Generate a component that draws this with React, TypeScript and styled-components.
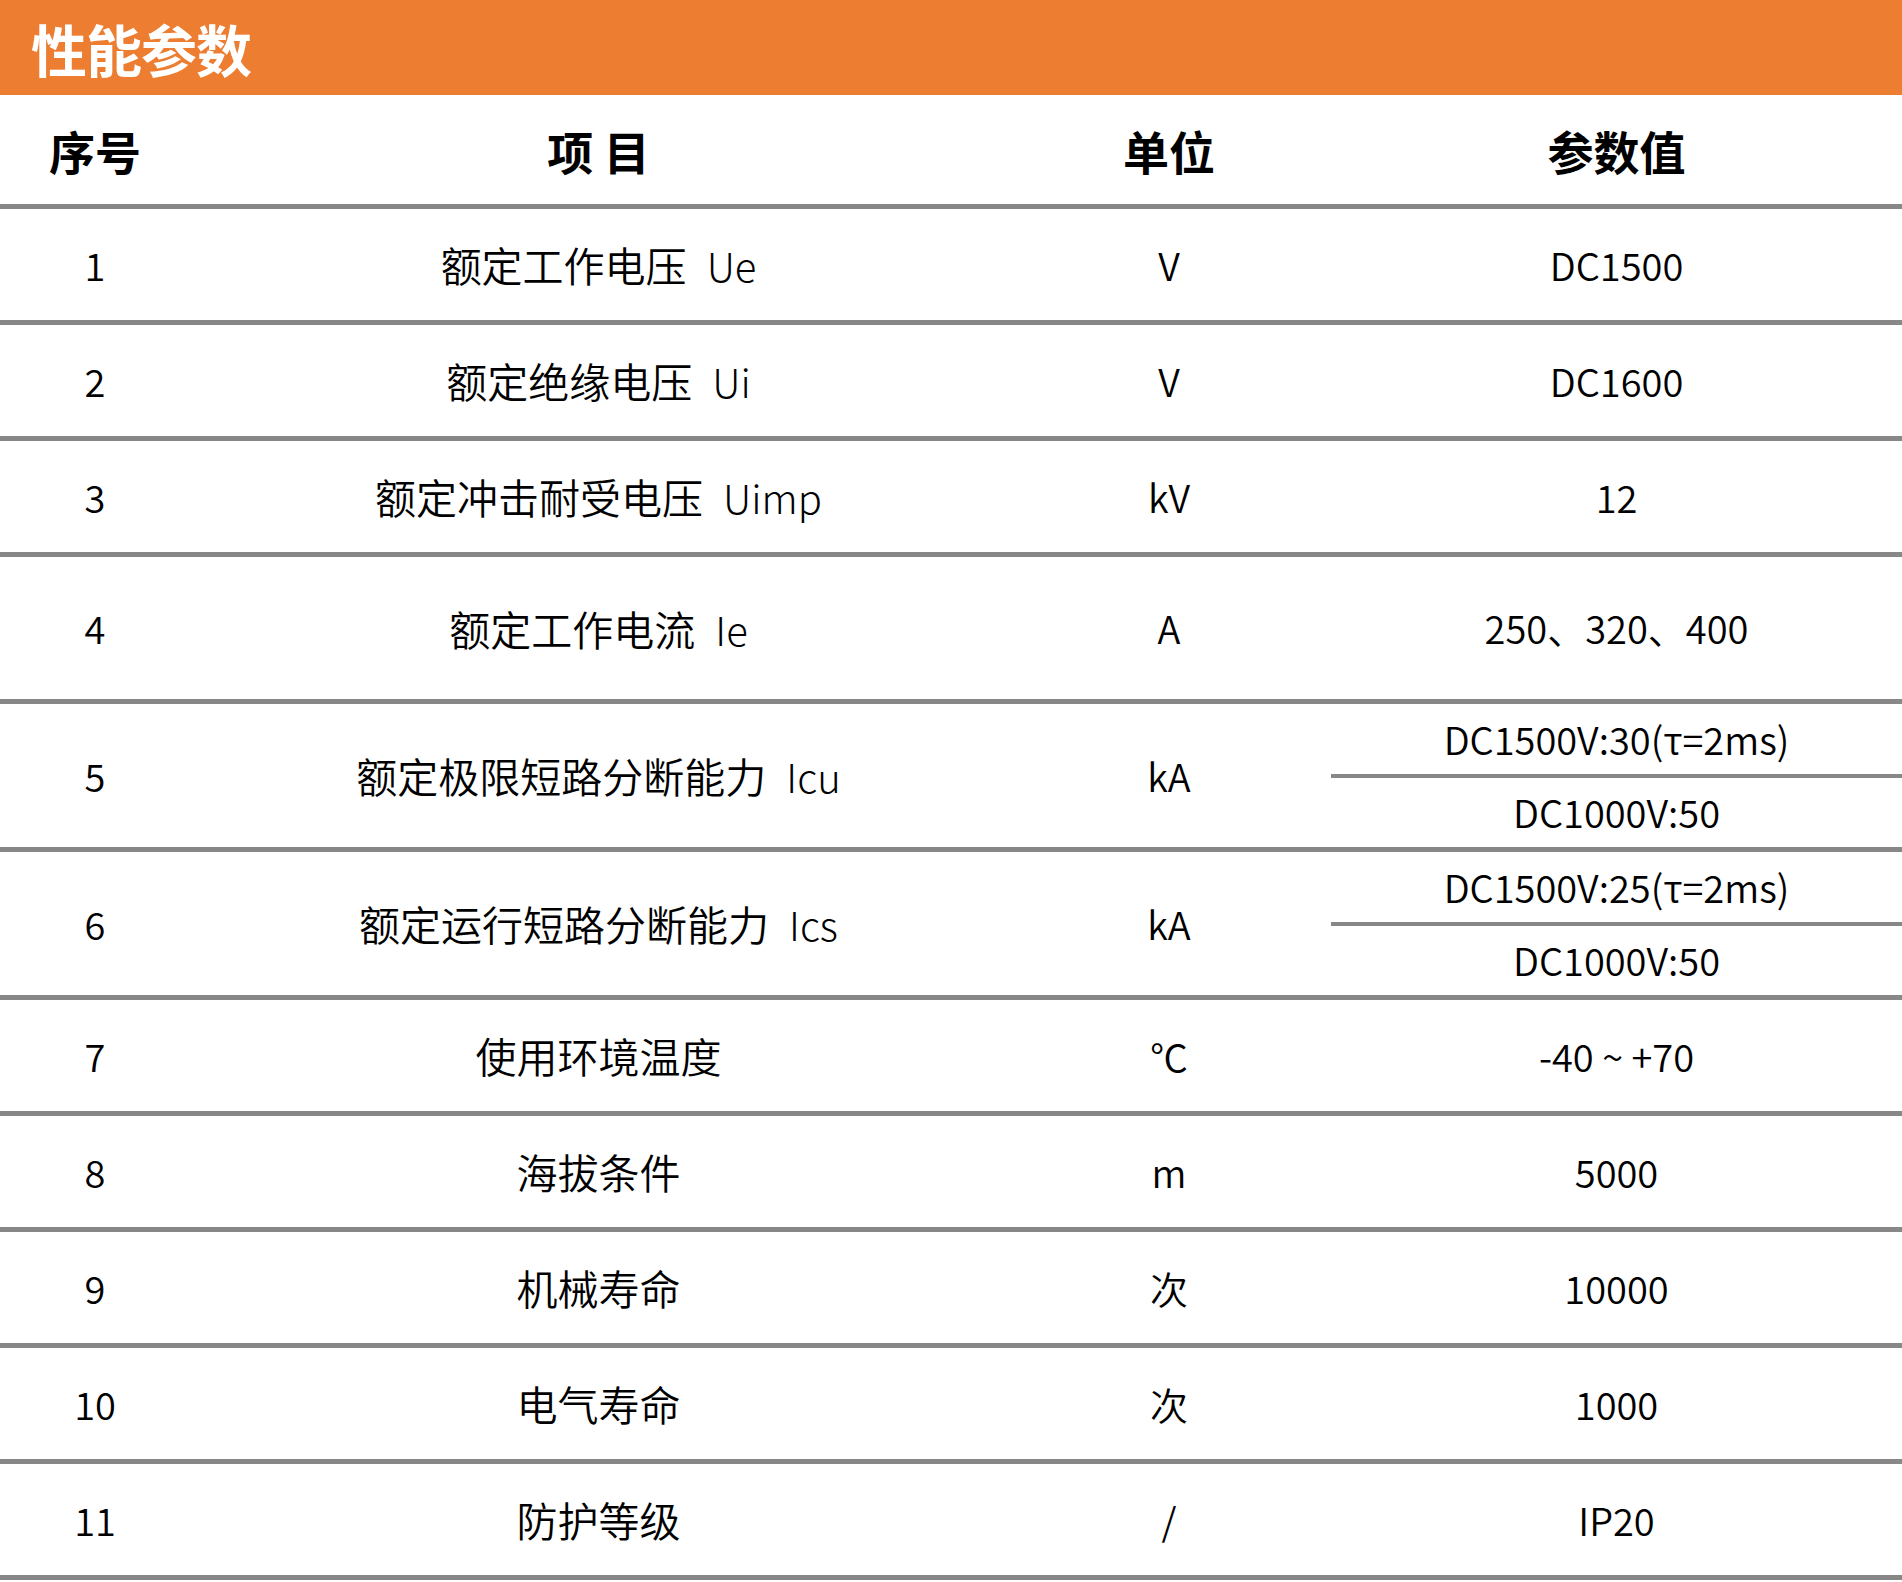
import React from "react";
import styled, { createGlobalStyle } from "styled-components";

const GlobalStyle = createGlobalStyle`
  html, body {
    margin: 0;
    padding: 0;
    background: #ffffff;
  }
  body {
    font-family: "Noto Sans CJK SC", "Noto Sans", sans-serif;
    color: #000;
  }
`;

const Page = styled.div`
  width: 1902px;
  background: #fff;
`;

const TitleBar = styled.div`
  height: 95px;
  background: #ed7d31;
  display: flex;
  align-items: center;
  padding-left: 31px;
  box-sizing: border-box;
`;

const Title = styled.h1`
  margin: 0;
  font-family: "Noto Sans CJK SC", sans-serif;
  font-weight: 700;
  font-size: 56px;
  line-height: 1;
  color: #fff;
  letter-spacing: -1px;
`;

const LINE = "#878787";

const Row = styled.div<{ $h: number }>`
  display: grid;
  grid-template-columns: 190px 817px 324px 571px;
  height: ${(p) => p.$h}px;
  border-bottom: 5px solid ${LINE};
  box-sizing: border-box;
`;

const Cell = styled.div`
  display: flex;
  align-items: center;
  justify-content: center;
  white-space: nowrap;
`;

const HeadText = styled.span`
  font-family: "Noto Sans CJK SC", sans-serif;
  font-weight: 700;
  font-size: 46px;
  line-height: 1;
  color: #000;
`;

const ItemText = styled.span`
  font-family: "Noto Sans CJK SC", sans-serif;
  font-weight: 350;
  font-size: 41px;
  line-height: 1;
  color: #000;
`;

const Latin = styled.span`
  font-family: "Noto Sans CJK SC", sans-serif;
  font-weight: 300;
  font-size: 40px;
  margin-left: 20px;
`;

const ValueText = styled.span`
  font-family: "Noto Sans CJK SC", sans-serif;
  font-weight: 350;
  font-size: 38px;
  line-height: 1;
  color: #000;
`;

const SplitCell = styled.div`
  display: flex;
  flex-direction: column;
`;

const SubCell = styled.div<{ $divider?: boolean }>`
  flex: 1;
  display: flex;
  align-items: center;
  justify-content: center;
  border-bottom: ${(p) => (p.$divider ? `4px solid ${LINE}` : "none")};
  white-space: nowrap;
`;

type Spec = {
  no: string;
  name: string;
  sym?: string;
  unit: string;
  values: string[];
  h: number;
};

const rows: Spec[] = [
  { no: "1", name: "额定工作电压", sym: "Ue", unit: "V", values: ["DC1500"], h: 116 },
  { no: "2", name: "额定绝缘电压", sym: "Ui", unit: "V", values: ["DC1600"], h: 116 },
  { no: "3", name: "额定冲击耐受电压", sym: "Uimp", unit: "kV", values: ["12"], h: 116 },
  { no: "4", name: "额定工作电流", sym: "Ie", unit: "A", values: ["250、320、400"], h: 147 },
  {
    no: "5",
    name: "额定极限短路分断能力",
    sym: "Icu",
    unit: "kA",
    values: ["DC1500V:30(τ=2ms)", "DC1000V:50"],
    h: 148,
  },
  {
    no: "6",
    name: "额定运行短路分断能力",
    sym: "Ics",
    unit: "kA",
    values: ["DC1500V:25(τ=2ms)", "DC1000V:50"],
    h: 148,
  },
  { no: "7", name: "使用环境温度", unit: "℃", values: ["-40 ~ +70"], h: 116 },
  { no: "8", name: "海拔条件", unit: "m", values: ["5000"], h: 116 },
  { no: "9", name: "机械寿命", unit: "次", values: ["10000"], h: 116 },
  { no: "10", name: "电气寿命", unit: "次", values: ["1000"], h: 116 },
  { no: "11", name: "防护等级", unit: "/", values: ["IP20"], h: 116 },
];

export default function App() {
  return (
    <Page>
      <GlobalStyle />
      <TitleBar>
        <Title>性能参数</Title>
      </TitleBar>
      <Row $h={114}>
        <Cell>
          <HeadText>序号</HeadText>
        </Cell>
        <Cell>
          <HeadText>项 目</HeadText>
        </Cell>
        <Cell>
          <HeadText>单位</HeadText>
        </Cell>
        <Cell>
          <HeadText>参数值</HeadText>
        </Cell>
      </Row>
      {rows.map((r) => (
        <Row key={r.no} $h={r.h}>
          <Cell>
            <ValueText>{r.no}</ValueText>
          </Cell>
          <Cell>
            <ItemText>
              {r.name}
              {r.sym && <Latin>{r.sym}</Latin>}
            </ItemText>
          </Cell>
          <Cell>
            <ValueText>{r.unit}</ValueText>
          </Cell>
          {r.values.length > 1 ? (
            <SplitCell>
              {r.values.map((v, i) => (
                <SubCell key={v} $divider={i < r.values.length - 1}>
                  <ValueText>{v}</ValueText>
                </SubCell>
              ))}
            </SplitCell>
          ) : (
            <Cell>
              <ValueText>{r.values[0]}</ValueText>
            </Cell>
          )}
        </Row>
      ))}
    </Page>
  );
}
